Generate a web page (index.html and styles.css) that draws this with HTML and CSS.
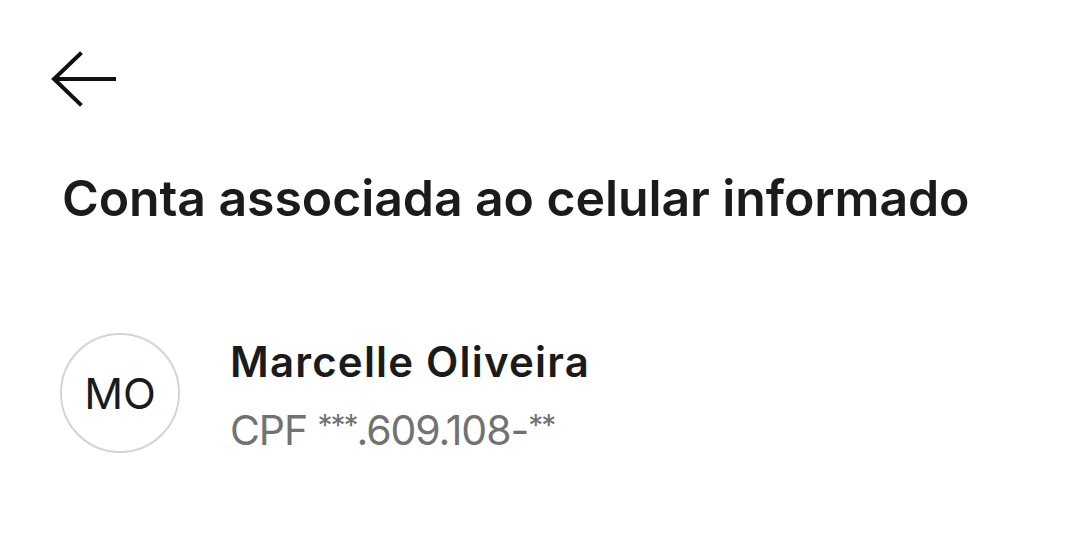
FILE: index.html
```html
<!DOCTYPE html>
<html lang="pt-BR">
<head>
<meta charset="utf-8">
<link rel="stylesheet" href="styles.css">
</head>
<body>
<div class="screen">
  <button class="back" aria-label="Voltar">
    <svg width="68" height="60" viewBox="0 0 68 60" fill="none" stroke="#111" stroke-width="4" stroke-linecap="square" stroke-linejoin="miter">
      <path d="M30 4 L4 29 L30 54"/>
      <path d="M5 29 L64 29"/>
    </svg>
  </button>
  <h1 class="title">Conta associada ao celular informado</h1>
  <div class="account">
    <div class="avatar">MO</div>
    <div class="info">
      <div class="name">Marcelle Oliveira</div>
      <div class="doc">CPF <span class="mask">***</span>.609.108-<span class="mask">**</span></div>
    </div>
  </div>
</div>
</body>
</html>
```
FILE: styles.css
```css
html, body {
  margin: 0;
  padding: 0;
  background: #ffffff;
}
body {
  font-family: Inter, "Liberation Sans", sans-serif;
  color: #1b1b1b;
}
.screen {
  display: flex;
  flex-direction: column;
  padding: 50px 0 0 0;
}
.back {
  display: block;
  margin-left: 50px;
  padding: 0;
  border: 0;
  background: none;
  width: 68px;
  height: 60px;
}
.back svg { display: block; }
.title {
  margin: 58px 0 0 62px;
  font-size: 50px;
  line-height: 60px;
  font-weight: 600;
  letter-spacing: -0.1px;
  color: #1b1b1b;
}
.account {
  display: flex;
  align-items: flex-start;
  gap: 50px;
  margin: 105px 0 0 60px;
}
.avatar {
  box-sizing: border-box;
  width: 120px;
  height: 120px;
  border: 2px solid #d4d4d4;
  border-radius: 50%;
  display: flex;
  align-items: center;
  justify-content: center;
  font-size: 43px;
  font-weight: 400;
  color: #1b1b1b;
}
.info {
  display: flex;
  flex-direction: column;
  gap: 12px;
  margin-top: 3px;
}
.name {
  font-size: 42px;
  line-height: 52px;
  font-weight: 600;
  letter-spacing: 1.2px;
}
.doc {
  font-size: 41px;
  line-height: 50px;
  font-weight: 400;
  color: #727272;
  font-variant-numeric: proportional-nums;
  letter-spacing: -1.1px;
}
.mask {
  font-size: 30px;
  vertical-align: 9px;
  letter-spacing: -2px;
}
```
